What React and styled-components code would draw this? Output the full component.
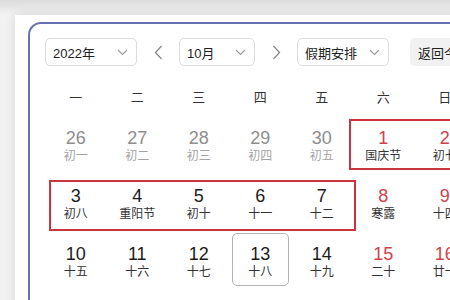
import React from 'react';
import styled, { createGlobalStyle } from 'styled-components';

const GlobalStyle = createGlobalStyle`
    html, body {
        margin: 0;
        padding: 0;
        background: #e9e9e9;
        overflow: hidden;
        font-family: 'Liberation Sans', 'Noto Sans CJK SC', sans-serif;
    }
`;

const Page = styled.div`
    width: 450px;
    height: 300px;
    padding: 15px 0 0 15px;
    box-sizing: border-box;
    background: linear-gradient(180deg, #dcdcdc 0px, #f2f2f2 15px);
`;

const Card = styled.div`
    width: 520px;
    height: 320px;
    background: #fff;
    padding: 7px 0 0 13px;
    box-sizing: border-box;
    box-shadow: 0 0 10px rgba(0, 0, 0, 0.12);
`;

const Panel = styled.div`
    width: 480px;
    height: 320px;
    box-sizing: border-box;
    border: 2px solid #6870b4;
    border-radius: 13px;
    padding: 14px 0 0 15px;
`;

const Toolbar = styled.div`
    display: flex;
    align-items: center;
    height: 28px;
`;

const Select = styled.div`
    display: flex;
    align-items: center;
    justify-content: space-between;
    width: ${(p) => p.width}px;
    height: 28px;
    box-sizing: border-box;
    padding: 0 8px 0 7px;
    border: 1px solid #dcdcdc;
    border-radius: 5px;
    font-size: 13px;
    color: #222;
    background: #fff;
`;

const Arrow = styled.div`
    display: flex;
    align-items: center;
    justify-content: center;
    width: 42px;
    height: 28px;
`;

const TodayButton = styled.div`
    display: flex;
    align-items: center;
    height: 28px;
    margin-left: 21px;
    padding: 0 10px 0 8px;
    border-radius: 5px;
    background: #f1f1f1;
    font-size: 13px;
    color: #222;
    white-space: nowrap;
`;

const Calendar = styled.div`
    position: relative;
    width: 430px;
    margin-top: 12px;
`;

const Grid = styled.div`
    display: grid;
    grid-template-columns: repeat(7, 61.5px);
`;

const WeekDay = styled.div`
    height: 39px;
    display: flex;
    align-items: center;
    justify-content: center;
    font-size: 13px;
    color: #333;
    padding-bottom: 2px;
    box-sizing: border-box;
`;

const Cell = styled.div`
    height: 53px;
    margin: 0 2.5px 5px;
    box-sizing: border-box;
    padding-top: 9px;
    display: flex;
    flex-direction: column;
    align-items: center;
    border: 1px solid ${(p) => (p.today ? '#b4b4b4' : 'transparent')};
    border-radius: 5px;
`;

const Num = styled.div`
    font-size: 18px;
    line-height: 22px;
    color: ${(p) => (p.muted ? '#8e8e8e' : p.red ? '#d2414b' : '#1c1c1c')};
`;

const Lunar = styled.div`
    font-size: 12px;
    line-height: 14px;
    color: ${(p) => (p.muted ? '#a3a3a3' : '#333')};
`;

const Mark = styled.div`
    position: absolute;
    left: ${(p) => p.x}px;
    top: ${(p) => p.y}px;
    width: ${(p) => p.w}px;
    height: ${(p) => p.h}px;
    border: 2px solid #c8353c;
    box-sizing: border-box;
    pointer-events: none;
`;

const Chevron = () => (
    <svg width="11" height="7" viewBox="0 0 11 7" fill="none">
        <path d="M1 1l4.5 4.5L10 1" stroke="#9a9a9a" strokeWidth="1.1" />
    </svg>
);

const Side = ({ dir }) => (
    <svg width="9" height="15" viewBox="0 0 9 15" fill="none">
        <path
            d={dir === 'left' ? 'M7.5 1L1.5 7.5l6 6.5' : 'M1.5 1l6 6.5-6 6.5'}
            stroke="#8a8a8a"
            strokeWidth="1.3"
        />
    </svg>
);

const weekDays = ['一', '二', '三', '四', '五', '六', '日'];

const days = [
    [26, '初一', 'muted'], [27, '初二', 'muted'], [28, '初三', 'muted'], [29, '初四', 'muted'],
    [30, '初五', 'muted'], [1, '国庆节', 'red'], [2, '初七', 'red'],
    [3, '初八'], [4, '重阳节'], [5, '初十'], [6, '十一'], [7, '十二'], [8, '寒露', 'red'], [9, '十四', 'red'],
    [10, '十五'], [11, '十六'], [12, '十七'], [13, '十八', 'today'], [14, '十九'], [15, '二十', 'red'],
    [16, '廿一', 'red'],
    [17, '廿二'], [18, '廿三'], [19, '廿四'], [20, '廿五'], [21, '廿六'], [22, '廿七', 'red'], [23, '霜降', 'red'],
];

const App = () => (
    <>
        <GlobalStyle />
        <Page>
            <Card>
                <Panel>
                    <Toolbar>
                        <Select width={92}>
                            <span>2022年</span>
                            <Chevron />
                        </Select>
                        <Arrow>
                            <Side dir="left" />
                        </Arrow>
                        <Select width={76}>
                            <span>10月</span>
                            <Chevron />
                        </Select>
                        <Arrow>
                            <Side dir="right" />
                        </Arrow>
                        <Select width={92}>
                            <span>假期安排</span>
                            <Chevron />
                        </Select>
                        <TodayButton>返回今天</TodayButton>
                    </Toolbar>
                    <Calendar>
                        <Grid>
                            {weekDays.map((d) => (
                                <WeekDay key={d}>{d}</WeekDay>
                            ))}
                            {days.map(([n, lunar, kind], i) => (
                                <Cell key={i} today={kind === 'today'}>
                                    <Num muted={kind === 'muted'} red={kind === 'red'}>
                                        {n}
                                    </Num>
                                    <Lunar muted={kind === 'muted'}>{lunar}</Lunar>
                                </Cell>
                            ))}
                        </Grid>
                        <Mark x={304} y={41} w={130} h={51} />
                        <Mark x={4} y={102} w={307} h={51} />
                    </Calendar>
                </Panel>
            </Card>
        </Page>
    </>
);

export default App;
